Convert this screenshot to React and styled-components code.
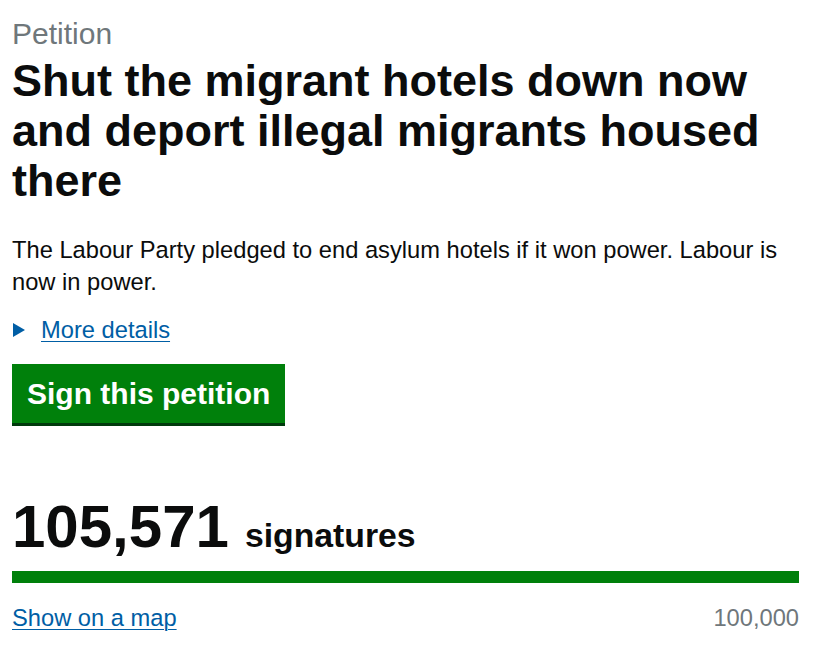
import styled, { createGlobalStyle } from 'styled-components'

const GlobalStyle = createGlobalStyle`
  html, body {
    margin: 0;
    padding: 0;
    background: #ffffff;
  }
  body {
    font-family: "Liberation Sans", Arial, sans-serif;
    color: #0b0c0c;
  }
`

const Page = styled.main`
  width: 787px;
  padding: 16px 12px 0 12px;
`

const Caption = styled.div`
  font-size: 30px;
  line-height: 36px;
  color: #6f777b;
  margin: 0 0 4px 0;
`

const Title = styled.h1`
  font-size: 45px;
  line-height: 50px;
  font-weight: 700;
  margin: 0 0 28px 0;
  color: #0b0c0c;
`

const Body = styled.p`
  font-size: 23.7px;
  line-height: 32px;
  margin: 0 0 16px 0;
`

const Details = styled.div`
  display: flex;
  align-items: center;
  gap: 16px;
  font-size: 23.7px;
  line-height: 32px;
  margin-bottom: 18px;
`

const Arrow = styled.span`
  width: 0;
  height: 0;
  border-top: 7px solid transparent;
  border-bottom: 7px solid transparent;
  border-left: 12px solid #005ea5;
  margin-left: 1px;
`

const TextLink = styled.a`
  color: #005ea5;
  text-decoration: underline;
  text-underline-offset: 3px;
  text-decoration-thickness: 1px;
  font-size: 23.7px;
  line-height: 32px;
`

const SignButton = styled.button`
  display: inline-block;
  background: #00800b;
  color: #ffffff;
  border: 0;
  box-shadow: 0 3px 0 #003a0c;
  font-family: inherit;
  font-weight: 700;
  font-size: 30px;
  line-height: 36px;
  padding: 12px 15px 11px 15px;
  margin: 0 0 69px 0;
  cursor: pointer;
`

const Count = styled.div`
  display: flex;
  align-items: baseline;
  gap: 16px;
  margin-bottom: 9px;
`

const Number = styled.span`
  font-size: 60px;
  line-height: 70px;
  font-weight: 700;
`

const Label = styled.span`
  font-size: 33.75px;
  font-weight: 700;
`

const Track = styled.div`
  height: 12px;
  background: #dee0e2;
  margin-bottom: 19px;
`

const Fill = styled.div`
  height: 100%;
  background: #00800b;
`

const Footer = styled.div`
  display: flex;
  justify-content: space-between;
  align-items: baseline;
`

const Target = styled.span`
  color: #6f777b;
  font-size: 23.7px;
  line-height: 32px;
`

export default function App() {
  const signatures = 105571
  const target = 100000
  const pct = Math.min(100, (signatures / target) * 100)

  return (
    <>
      <GlobalStyle />
      <Page>
        <Caption>Petition</Caption>
        <Title>Shut the migrant hotels down now and deport illegal migrants housed there</Title>
        <Body>
          The Labour Party pledged to end asylum hotels if it won power. Labour is now in power.
        </Body>
        <Details>
          <Arrow />
          <TextLink href="#">More details</TextLink>
        </Details>
        <SignButton>Sign this petition</SignButton>
        <Count>
          <Number>{signatures.toLocaleString('en-GB')}</Number>
          <Label>signatures</Label>
        </Count>
        <Track>
          <Fill style={{ width: pct + '%' }} />
        </Track>
        <Footer>
          <TextLink href="#">Show on a map</TextLink>
          <Target>{target.toLocaleString('en-GB')}</Target>
        </Footer>
      </Page>
    </>
  )
}
